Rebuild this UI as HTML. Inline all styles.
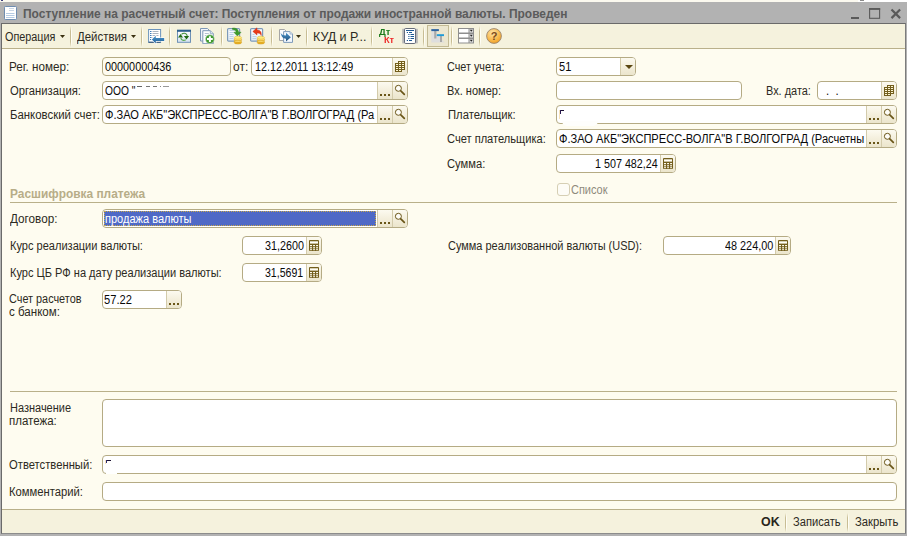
<!DOCTYPE html>
<html><head><meta charset="utf-8">
<style>
html,body{margin:0;padding:0;}
body{width:907px;height:536px;overflow:hidden;background:#b2b2b2;position:relative;font-family:"Liberation Sans",sans-serif;font-size:12px;color:#2c2a22;}
.a,.f,.l,.ln,.sep,svg{position:absolute;}
.l{white-space:nowrap;line-height:13px;transform-origin:0 0;}
.f{box-sizing:border-box;height:19px;border:1px solid #b5ab84;border-radius:4px;background:#fff;overflow:hidden;color:#0a0a0a;}
.t{position:absolute;top:3px;line-height:13px;white-space:nowrap;transform-origin:0 0;}
.b{position:absolute;top:0;bottom:0;width:15px;background:linear-gradient(#fcfaf0,#f3eedb 55%,#ebe5cc);border-left:1px solid #d3cbab;box-sizing:border-box;}
.ln{height:1px;background:#b9b08a;}
.sep{top:26px;width:2px;height:21px;background:linear-gradient(rgba(200,189,148,0),#c8bd94 25%,#c8bd94 75%,rgba(200,189,148,0)) 0 0/1px 100% no-repeat,linear-gradient(rgba(255,255,255,0),#fffef6 25%,#fffef6 75%,rgba(255,255,255,0)) 1px 0/1px 100% no-repeat;}
</style></head><body>
<div class="a" style="left:0;top:0;width:907px;height:2px;background:#fbf9ef"></div>
<div class="a" style="left:1px;top:0;width:2px;height:1px;background:#3a3a7a"></div>
<div class="a" style="left:858px;top:0;width:49px;height:2px;background:#fff"></div>
<div class="a" style="left:860px;top:0;width:4px;height:1px;background:#8a8a8a"></div>
<div class="a" style="left:1px;top:23px;width:905px;height:511px;background:#fefcf0;border:1px solid #6a6a6a;border-bottom-color:#8c8c8c;border-right-color:#7c7c7c;box-sizing:border-box"></div>
<div class="a" style="left:2px;top:24px;width:903px;height:25px;background:#f5f2dd;border-bottom:1px solid #b9b08a;box-sizing:border-box"></div>
<div class="a" style="left:2px;top:509px;width:903px;height:24px;background:#f5f2dd;border-top:1px solid #b9b08a;box-sizing:border-box"></div>
<div class="l" style="left:23.45px;top:8px;transform:scaleX(0.9960);font-weight:bold;color:#5b5b5b;">Поступление на расчетный счет: Поступления от продажи иностранной валюты. Проведен</div>
<div class="l" style="left:9.33px;top:61px;transform:scaleX(0.9720);">Рег. номер:</div>
<div class="f" style="left:102px;top:57px;width:129px;background:#fefcf0;"><span class="t" style="left:2.35px;transform:scaleX(0.9036);">00000000436</span></div>
<div class="l" style="left:233.30px;top:61px;transform:scaleX(0.9982);">от:</div>
<div class="f" style="left:251px;top:57px;width:157px;"><span class="t" style="left:2.51px;transform:scaleX(0.9002);">12.12.2011 13:12:49</span><span class="b" style="right:0px"><svg width="14" height="17" viewBox="0 0 14 17" style="left:0;top:0"><path d="M5 3h7v9h-3v2h-7v-9h3z" fill="#735e1c"/><g fill="#fdf6d4"><rect x="6" y="4" width="2" height="1"/><rect x="9" y="4" width="2" height="1"/><rect x="3" y="6" width="2" height="1"/><rect x="6" y="6" width="2" height="1"/><rect x="9" y="6" width="2" height="1"/><rect x="3" y="8" width="2" height="1"/><rect x="6" y="8" width="2" height="1"/><rect x="9" y="8" width="2" height="1"/><rect x="3" y="10" width="2" height="1"/><rect x="6" y="10" width="2" height="1"/><rect x="9" y="10" width="2" height="1"/><rect x="3" y="12" width="2" height="1"/><rect x="6" y="12" width="2" height="1"/></g></svg></span></div>
<div class="l" style="left:9.53px;top:85px;transform:scaleX(0.9363);">Организация:</div>
<div class="f" style="left:102px;top:81px;width:306px;"><span class="a" style="left:34px;top:4px;width:5px;height:1px;background:#666"></span><span class="a" style="left:43px;top:4px;width:4px;height:1px;background:#777"></span><span class="a" style="left:50px;top:4px;width:4px;height:1px;background:#777"></span><span class="a" style="left:57px;top:4px;width:1px;height:1px;background:#888"></span><span class="a" style="left:60px;top:4px;width:6px;height:1px;background:#999"></span><span class="t" style="left:1.57px;transform:scaleX(0.8520);">ООО "</span><span class="b" style="right:15px"><svg width="14" height="17" viewBox="0 0 14 17" style="left:0;top:0"><rect x="2" y="12" width="2" height="2" fill="#6a5618"/><rect x="6" y="12" width="2" height="2" fill="#6a5618"/><rect x="10" y="12" width="2" height="2" fill="#6a5618"/></svg></span><span class="b" style="right:0px"><svg width="14" height="17" viewBox="0 0 14 17" style="left:0;top:0"><circle cx="5.400" cy="6.300" r="3" fill="#fefdf8" stroke="#6a5618" stroke-width="1"/><path d="M7.800 8.800L11.300 12.300" stroke="#6a5618" stroke-width="1.700" stroke-linecap="round"/></svg></span></div>
<div class="l" style="left:9.65px;top:109px;transform:scaleX(0.9490);">Банковский счет:</div>
<div class="f" style="left:102px;top:105px;width:306px;"><span class="t" style="left:2.02px;transform:scaleX(0.9242);">Ф.ЗАО АКБ"ЭКСПРЕСС-ВОЛГА"В Г.ВОЛГОГРАД (Ра</span><span class="b" style="right:15px"><svg width="14" height="17" viewBox="0 0 14 17" style="left:0;top:0"><rect x="2" y="12" width="2" height="2" fill="#6a5618"/><rect x="6" y="12" width="2" height="2" fill="#6a5618"/><rect x="10" y="12" width="2" height="2" fill="#6a5618"/></svg></span><span class="b" style="right:0px"><svg width="14" height="17" viewBox="0 0 14 17" style="left:0;top:0"><circle cx="5.400" cy="6.300" r="3" fill="#fefdf8" stroke="#6a5618" stroke-width="1"/><path d="M7.800 8.800L11.300 12.300" stroke="#6a5618" stroke-width="1.700" stroke-linecap="round"/></svg></span></div>
<div class="l" style="left:447.04px;top:61px;transform:scaleX(0.9014);">Счет учета:</div>
<div class="f" style="left:556px;top:57px;width:80px;"><span class="t" style="left:1.54px;transform:scaleX(0.9224);">51</span><span class="b" style="right:0px"><svg width="14" height="17" viewBox="0 0 14 17" style="left:0;top:0"><path d="M4 7h8l-4 4z" fill="#5a4712"/></svg></span></div>
<div class="l" style="left:447.48px;top:85px;transform:scaleX(0.9183);">Вх. номер:</div>
<div class="f" style="left:556px;top:81px;width:186px;"></div>
<div class="l" style="left:765.79px;top:85px;transform:scaleX(0.9101);">Вх. дата:</div>
<div class="f" style="left:817px;top:81px;width:80px;"><span class="t" style="left:7.94px;transform:scaleX(0.9438);">.&nbsp; .</span><span class="b" style="right:0px"><svg width="14" height="17" viewBox="0 0 14 17" style="left:0;top:0"><path d="M5 3h7v9h-3v2h-7v-9h3z" fill="#735e1c"/><g fill="#fdf6d4"><rect x="6" y="4" width="2" height="1"/><rect x="9" y="4" width="2" height="1"/><rect x="3" y="6" width="2" height="1"/><rect x="6" y="6" width="2" height="1"/><rect x="9" y="6" width="2" height="1"/><rect x="3" y="8" width="2" height="1"/><rect x="6" y="8" width="2" height="1"/><rect x="9" y="8" width="2" height="1"/><rect x="3" y="10" width="2" height="1"/><rect x="6" y="10" width="2" height="1"/><rect x="9" y="10" width="2" height="1"/><rect x="3" y="12" width="2" height="1"/><rect x="6" y="12" width="2" height="1"/></g></svg></span></div>
<div class="l" style="left:447.86px;top:109px;transform:scaleX(0.9386);">Плательщик:</div>
<div class="f" style="left:556px;top:105px;width:341px;"><span class="a" style="left:2px;top:4px;width:1px;height:9px;background:#f8e2b8"></span><span class="a" style="left:3px;top:4px;width:4px;height:1px;background:#1a1030"></span><span class="a" style="left:3px;top:4px;width:1px;height:4px;background:#2a1a50"></span><span class="b" style="right:15px"><svg width="14" height="17" viewBox="0 0 14 17" style="left:0;top:0"><rect x="2" y="12" width="2" height="2" fill="#6a5618"/><rect x="6" y="12" width="2" height="2" fill="#6a5618"/><rect x="10" y="12" width="2" height="2" fill="#6a5618"/></svg></span><span class="b" style="right:0px"><svg width="14" height="17" viewBox="0 0 14 17" style="left:0;top:0"><circle cx="5.400" cy="6.300" r="3" fill="#fefdf8" stroke="#6a5618" stroke-width="1"/><path d="M7.800 8.800L11.300 12.300" stroke="#6a5618" stroke-width="1.700" stroke-linecap="round"/></svg></span></div>
<div class="a" style="left:562px;top:121px;width:36px;height:5px;background:#fefefc;border-radius:0 0 6px 6px"></div>
<div class="l" style="left:447.02px;top:133px;transform:scaleX(0.9246);">Счет плательщика:</div>
<div class="f" style="left:556px;top:129px;width:341px;"><span class="t" style="left:2.32px;transform:scaleX(0.9234);">Ф.ЗАО АКБ"ЭКСПРЕСС-ВОЛГА"В Г.ВОЛГОГРАД (Расчетны</span><span class="b" style="right:15px"><svg width="14" height="17" viewBox="0 0 14 17" style="left:0;top:0"><rect x="2" y="12" width="2" height="2" fill="#6a5618"/><rect x="6" y="12" width="2" height="2" fill="#6a5618"/><rect x="10" y="12" width="2" height="2" fill="#6a5618"/></svg></span><span class="b" style="right:0px"><svg width="14" height="17" viewBox="0 0 14 17" style="left:0;top:0"><circle cx="5.400" cy="6.300" r="3" fill="#fefdf8" stroke="#6a5618" stroke-width="1"/><path d="M7.800 8.800L11.300 12.300" stroke="#6a5618" stroke-width="1.700" stroke-linecap="round"/></svg></span></div>
<div class="l" style="left:447.02px;top:158px;transform:scaleX(0.9321);">Сумма:</div>
<div class="f" style="left:556px;top:154px;width:120px;"><span class="t" style="left:38.42px;transform:scaleX(0.8958);">1 507 482,24</span><span class="b" style="right:0px"><svg width="14" height="17" viewBox="0 0 14 17" style="left:0;top:0"><rect x="2" y="3" width="10" height="11" rx="1" fill="#735e1c"/><rect x="3" y="4.300" width="8" height="2.300" fill="#fffef6"/><g fill="#fffdf0"><rect x="3" y="8" width="2" height="1.200"/><rect x="6.100" y="8" width="1.900" height="1.200"/><rect x="9.100" y="8" width="1.900" height="1.200"/><rect x="3" y="10.200" width="2" height="1.200"/><rect x="6.100" y="10.200" width="1.900" height="1.200"/><rect x="9.100" y="10.200" width="1.900" height="1.200"/><rect x="3" y="12.200" width="2" height="1"/><rect x="6.100" y="12.200" width="1.900" height="1"/><rect x="9.100" y="12.200" width="1.900" height="1"/></g></svg></span></div>
<div class="a" style="left:557px;top:183px;width:13px;height:13px;border:1px solid #d6cfb4;border-radius:3px;box-sizing:border-box;background:#fdfcf6"></div>
<div class="l" style="left:571.23px;top:184px;transform:scaleX(0.9146);color:#8e8a7c;">Список</div>
<div class="l" style="left:10.16px;top:188px;transform:scaleX(0.9915);font-weight:bold;color:#b7ad88;">Расшифровка платежа</div>
<div class="ln" style="left:10px;top:202px;width:887px"></div>
<div class="l" style="left:10.08px;top:213px;transform:scaleX(0.9752);">Договор:</div>
<div class="f" style="left:102px;top:209px;width:306px;"><span class="a" style="left:1px;top:1px;width:272px;height:15px;background:#4f69c6;outline:1px dotted #c9a94a;outline-offset:-1px"></span><span class="t" style="left:1.50px;transform:scaleX(0.9191);color:#fff;">продажа валюты</span><span class="b" style="right:15px"><svg width="14" height="17" viewBox="0 0 14 17" style="left:0;top:0"><rect x="2" y="12" width="2" height="2" fill="#6a5618"/><rect x="6" y="12" width="2" height="2" fill="#6a5618"/><rect x="10" y="12" width="2" height="2" fill="#6a5618"/></svg></span><span class="b" style="right:0px"><svg width="14" height="17" viewBox="0 0 14 17" style="left:0;top:0"><circle cx="5.400" cy="6.300" r="3" fill="#fefdf8" stroke="#6a5618" stroke-width="1"/><path d="M7.800 8.800L11.300 12.300" stroke="#6a5618" stroke-width="1.700" stroke-linecap="round"/></svg></span></div>
<div class="l" style="left:9.68px;top:240px;transform:scaleX(0.9201);">Курс реализации валюты:</div>
<div class="f" style="left:242px;top:236px;width:80px;"><span class="t" style="left:21.75px;transform:scaleX(0.8965);">31,2600</span><span class="b" style="right:0px"><svg width="14" height="17" viewBox="0 0 14 17" style="left:0;top:0"><rect x="2" y="3" width="10" height="11" rx="1" fill="#735e1c"/><rect x="3" y="4.300" width="8" height="2.300" fill="#fffef6"/><g fill="#fffdf0"><rect x="3" y="8" width="2" height="1.200"/><rect x="6.100" y="8" width="1.900" height="1.200"/><rect x="9.100" y="8" width="1.900" height="1.200"/><rect x="3" y="10.200" width="2" height="1.200"/><rect x="6.100" y="10.200" width="1.900" height="1.200"/><rect x="9.100" y="10.200" width="1.900" height="1.200"/><rect x="3" y="12.200" width="2" height="1"/><rect x="6.100" y="12.200" width="1.900" height="1"/><rect x="9.100" y="12.200" width="1.900" height="1"/></g></svg></span></div>
<div class="l" style="left:447.93px;top:240px;transform:scaleX(0.9134);">Сумма реализованной валюты (USD):</div>
<div class="f" style="left:663px;top:236px;width:128px;"><span class="t" style="left:60.87px;transform:scaleX(0.9043);">48 224,00</span><span class="b" style="right:0px"><svg width="14" height="17" viewBox="0 0 14 17" style="left:0;top:0"><rect x="2" y="3" width="10" height="11" rx="1" fill="#735e1c"/><rect x="3" y="4.300" width="8" height="2.300" fill="#fffef6"/><g fill="#fffdf0"><rect x="3" y="8" width="2" height="1.200"/><rect x="6.100" y="8" width="1.900" height="1.200"/><rect x="9.100" y="8" width="1.900" height="1.200"/><rect x="3" y="10.200" width="2" height="1.200"/><rect x="6.100" y="10.200" width="1.900" height="1.200"/><rect x="9.100" y="10.200" width="1.900" height="1.200"/><rect x="3" y="12.200" width="2" height="1"/><rect x="6.100" y="12.200" width="1.900" height="1"/><rect x="9.100" y="12.200" width="1.900" height="1"/></g></svg></span></div>
<div class="l" style="left:9.68px;top:267px;transform:scaleX(0.9207);">Курс ЦБ РФ на дату реализации валюты:</div>
<div class="f" style="left:242px;top:263px;width:80px;"><span class="t" style="left:21.76px;transform:scaleX(0.8802);">31,5691</span><span class="b" style="right:0px"><svg width="14" height="17" viewBox="0 0 14 17" style="left:0;top:0"><rect x="2" y="3" width="10" height="11" rx="1" fill="#735e1c"/><rect x="3" y="4.300" width="8" height="2.300" fill="#fffef6"/><g fill="#fffdf0"><rect x="3" y="8" width="2" height="1.200"/><rect x="6.100" y="8" width="1.900" height="1.200"/><rect x="9.100" y="8" width="1.900" height="1.200"/><rect x="3" y="10.200" width="2" height="1.200"/><rect x="6.100" y="10.200" width="1.900" height="1.200"/><rect x="9.100" y="10.200" width="1.900" height="1.200"/><rect x="3" y="12.200" width="2" height="1"/><rect x="6.100" y="12.200" width="1.900" height="1"/><rect x="9.100" y="12.200" width="1.900" height="1"/></g></svg></span></div>
<div class="l" style="left:9.13px;top:293px;transform:scaleX(0.9052);">Счет расчетов</div>
<div class="l" style="left:9.22px;top:306px;transform:scaleX(0.9639);">с банком:</div>
<div class="f" style="left:102px;top:290px;width:80px;"><span class="t" style="left:1.44px;transform:scaleX(0.9276);">57.22</span><span class="b" style="right:0px"><svg width="14" height="17" viewBox="0 0 14 17" style="left:0;top:0"><rect x="2" y="12" width="2" height="2" fill="#6a5618"/><rect x="6" y="12" width="2" height="2" fill="#6a5618"/><rect x="10" y="12" width="2" height="2" fill="#6a5618"/></svg></span></div>
<div class="ln" style="left:10px;top:391px;width:887px"></div>
<div class="l" style="left:9.68px;top:402px;transform:scaleX(0.9152);">Назначение</div>
<div class="l" style="left:8.86px;top:415px;transform:scaleX(0.9587);">платежа:</div>
<div class="f" style="left:102px;top:399px;width:795px;height:48px;"></div>
<div class="l" style="left:9.43px;top:459px;transform:scaleX(0.9360);">Ответственный:</div>
<div class="f" style="left:102px;top:455px;width:795px;"><span class="a" style="left:2px;top:4px;width:1px;height:4px;background:#f8e2b8"></span><span class="a" style="left:3px;top:4px;width:5px;height:1px;background:#1a1030"></span><span class="a" style="left:3px;top:4px;width:1px;height:3px;background:#2a2a70"></span><span class="b" style="right:15px"><svg width="14" height="17" viewBox="0 0 14 17" style="left:0;top:0"><rect x="2" y="12" width="2" height="2" fill="#6a5618"/><rect x="6" y="12" width="2" height="2" fill="#6a5618"/><rect x="10" y="12" width="2" height="2" fill="#6a5618"/></svg></span><span class="b" style="right:0px"><svg width="14" height="17" viewBox="0 0 14 17" style="left:0;top:0"><circle cx="5.400" cy="6.300" r="3" fill="#fefdf8" stroke="#6a5618" stroke-width="1"/><path d="M7.800 8.800L11.300 12.300" stroke="#6a5618" stroke-width="1.700" stroke-linecap="round"/></svg></span></div>
<div class="a" style="left:106px;top:469px;width:11px;height:5px;background:#fff"></div>
<div class="l" style="left:9.46px;top:486px;transform:scaleX(0.9366);">Комментарий:</div>
<div class="f" style="left:102px;top:482px;width:795px;"></div>
<div class="l" style="left:761.28px;top:516px;transform:scaleX(1.0360);font-weight:bold;color:#2a261a;">OK</div>
<div class="l" style="left:792.95px;top:516px;transform:scaleX(0.9270);">Записать</div>
<div class="l" style="left:854.85px;top:516px;transform:scaleX(0.9388);">Закрыть</div>
<div class="sep" style="left:785px;top:513px;height:19px"></div>
<div class="sep" style="left:847px;top:513px;height:19px"></div>
<div class="l" style="left:5.35px;top:31px;transform:scaleX(0.9009);">Операция</div>
<div class="l" style="left:76.78px;top:31px;transform:scaleX(0.9511);">Действия</div>
<div class="l" style="left:313.26px;top:31px;transform:scaleX(1.0370);">КУД и Р...</div>
<div class="sep" style="left:70px"></div>
<div class="sep" style="left:141px"></div>
<div class="sep" style="left:169px"></div>
<div class="sep" style="left:221px"></div>
<div class="sep" style="left:271px"></div>
<div class="sep" style="left:306px"></div>
<div class="sep" style="left:371px"></div>
<div class="sep" style="left:423px"></div>
<div class="sep" style="left:451px"></div>
<div class="sep" style="left:479px"></div>
<svg width="5" height="3" style="left:60px;top:35px"><path d="M0 0h5l-2.500 3z" fill="#3a3010"/></svg>
<svg width="5" height="3" style="left:131px;top:35px"><path d="M0 0h5l-2.500 3z" fill="#3a3010"/></svg>
<svg width="5" height="3" style="left:296px;top:35px"><path d="M0 0h5l-2.500 3z" fill="#3a3010"/></svg>
<!-- title icon -->
<svg width="14" height="15" viewBox="0 0 14 15" style="left:4px;top:6px"><rect x="0.500" y="0.500" width="12" height="13" rx="0.800" fill="#fff" stroke="#6f8db0"/><path d="M5 2.500h5M5 4.500h5" stroke="#c9d6e6"/><path d="M2 7.500h8.500M2 9.500h8.500M2 11.500h8.500" stroke="#b5cbe3"/></svg>
<!-- window buttons -->
<svg width="56" height="14" viewBox="0 0 56 14" style="left:848px;top:7px"><rect x="3" y="10" width="8" height="2" fill="#5a5a5a"/><rect x="21.600" y="2" width="10" height="9.300" fill="none" stroke="#5a5a5a" stroke-width="1.100"/><rect x="21" y="1" width="11.200" height="1.800" fill="#5a5a5a"/><path d="M43.500 2.500l8.600 8.600M52.100 2.500l-8.600 8.600" stroke="#5a5a5a" stroke-width="2.200"/></svg>
<!-- 1: list with blue arrow -->
<svg width="18" height="17" viewBox="0 0 18 17" style="left:147px;top:28px"><defs><linearGradient id="a1g" x1="0" y1="0" x2="0" y2="1"><stop offset="0" stop-color="#4a94cc"/><stop offset="1" stop-color="#1f5f96"/></linearGradient></defs><rect x="1.600" y="1.500" width="12" height="12.800" fill="#fff" stroke="#6b93bc" stroke-width="1"/><path d="M1.600 14.300h12" stroke="#3f5f80" stroke-width="1.200"/><path d="M3 3.500h1.500M3 5.500h1.500M3 7.500h1.500M3 9.500h1.500M3 11.500h1.500" stroke="#3a7ab8"/><path d="M5.500 3.500h6M5.500 5.500h6M5.500 7.500h6M5.500 9.500h2" stroke="#aab4c0"/><path d="M4.900 11.500l3.900-3.800v2.400h8.400v2.900h-8.400v2.600z" fill="url(#a1g)" stroke="#fff" stroke-width="1.200" paint-order="stroke"/></svg>
<!-- 2: window refresh -->
<svg width="16" height="16" viewBox="0 0 16 16" style="left:176px;top:28px"><defs><linearGradient id="wg" x1="0" y1="0" x2="0" y2="1"><stop offset="0" stop-color="#ffffff"/><stop offset="1" stop-color="#d4e2f0"/></linearGradient></defs><rect x="1.500" y="2.300" width="13" height="12" fill="url(#wg)" stroke="#6f92b6"/><rect x="1" y="1.800" width="14" height="2" fill="#2c5f8e"/><path d="M5.500 6.300c2-1.800 5-1.300 5.800 1.500" fill="none" stroke="#3f8f33" stroke-width="1.100"/><path d="M9.800 11.700c-2 1.300-4.300 0.800-5-1.700" fill="none" stroke="#5aa84e" stroke-width="1.100"/><path d="M4.500 5.900l2.500 3.700h-5z" fill="#1f6b12"/><path d="M10.500 11.400l-2.600-3.500h5.200z" fill="#1f6b12"/></svg>
<!-- 3: copy with plus -->
<svg width="17" height="17" viewBox="0 0 17 17" style="left:199px;top:27px"><path d="M1.500 1.500h7l1.500 1.500v11h-8.500z" fill="#f1f5fa" stroke="#7e98b6"/><path d="M3.800 3.700h7.500l3 3v10h-10.500z" fill="#fdfeff" stroke="#7e98b6"/><path d="M11.300 3.700v3h3" fill="#dde7f2" stroke="#7e98b6" stroke-width="0.700"/><path d="M5.800 6.500h4M5.800 8.500h1.500" stroke="#b4c2d2"/><circle cx="10.900" cy="12.100" r="4.700" fill="#9fc79a"/><circle cx="10.900" cy="12.100" r="3.900" fill="#3f9a2f"/><path d="M10.900 9.200v5.800M8 12.100h5.800" stroke="#fff" stroke-width="2"/></svg>
<!-- 4: doc green arrow coins -->
<svg width="17" height="18" viewBox="0 0 17 18" style="left:226px;top:27px"><defs><linearGradient id="pgG" x1="0" y1="0" x2="0" y2="1"><stop offset="0" stop-color="#ffffff"/><stop offset="1" stop-color="#dfeaf5"/></linearGradient></defs><rect x="1.600" y="1.600" width="12" height="12.600" rx="1" fill="url(#pgG)" stroke="#7d9aba" stroke-width="1.200"/><path d="M3.500 3.500h5M3.500 5.500h4M3.500 7.500h4M3.500 9.500h4M3.500 11.500h4" stroke="#bcd0e6"/><path d="M6.500 1c3.300-0.300 5.800 1 6.200 4.200h2.400l-3.700 3.800-3.600-3.800h2.300c-0.300-1.700-1.500-2.600-3.600-2.700z" fill="#3a9a2a" stroke="#2a7a1a" stroke-width="0.400"/><g stroke="#c9921a" stroke-width="0.500"><ellipse cx="11.850" cy="15.500" rx="3.700" ry="1.500" fill="#eeb525"/><ellipse cx="11.850" cy="13.900" rx="3.700" ry="1.500" fill="#f3c233"/><ellipse cx="11.850" cy="12.300" rx="3.700" ry="1.500" fill="#f3c233"/><ellipse cx="11.850" cy="10.700" rx="3.700" ry="1.500" fill="#fdec7c" stroke="#e0b030"/></g><path d="M8.600 12.300c2 0.900 4.500 0.900 6.500 0M8.600 13.900c2 0.900 4.500 0.900 6.500 0" stroke="#fff3a8" stroke-width="0.500" fill="none"/></svg>
<!-- 5: doc red arrow coins -->
<svg width="17" height="18" viewBox="0 0 17 18" style="left:249px;top:27px"><defs><linearGradient id="pgR" x1="0" y1="0" x2="0" y2="1"><stop offset="0" stop-color="#ffffff"/><stop offset="1" stop-color="#dfeaf5"/></linearGradient></defs><rect x="1.600" y="1.600" width="12" height="12.600" rx="1" fill="url(#pgR)" stroke="#7d9aba" stroke-width="1.200"/><path d="M3.500 7.500h2M3.500 9.500h4M3.500 11.500h4" stroke="#bcd0e6"/><path d="M3.800 4.400l4.200-3.600v2.200c3.200 0 4.800 1.900 4.200 5.600-0.500-1.900-1.700-2.600-4.200-2.600v2z" fill="#e83a1a" stroke="#c82a10" stroke-width="0.400"/><g stroke="#c9921a" stroke-width="0.500"><ellipse cx="11.850" cy="15.500" rx="3.700" ry="1.500" fill="#eeb525"/><ellipse cx="11.850" cy="13.900" rx="3.700" ry="1.500" fill="#f3c233"/><ellipse cx="11.850" cy="12.300" rx="3.700" ry="1.500" fill="#f3c233"/><ellipse cx="11.850" cy="10.700" rx="3.700" ry="1.500" fill="#fdec7c" stroke="#e0b030"/></g><path d="M8.600 12.300c2 0.900 4.500 0.900 6.500 0M8.600 13.900c2 0.900 4.500 0.900 6.500 0" stroke="#fff3a8" stroke-width="0.500" fill="none"/></svg>
<!-- 6: docs with blue arrow -->
<svg width="16" height="16" viewBox="0 0 16 16" style="left:278px;top:28px"><defs><linearGradient id="bag" x1="0" y1="0" x2="0" y2="1"><stop offset="0" stop-color="#4a94cc"/><stop offset="1" stop-color="#1f4f7a"/></linearGradient></defs><path d="M1.500 1.500h5l2 2v9h-7z" fill="#fbfcfd" stroke="#a6a6a6"/><path d="M5.600 3.600h6.400l2.500 2.500v8.300h-8.900z" fill="#f3f8fd" stroke="#7f9bb9"/><path d="M12 3.600v2.500h2.500" fill="#dbe6f2" stroke="#7f9bb9" stroke-width="0.600"/><path d="M2.600 4.600c0.600 2 2.500 3 5.400 3v-2.900l4.900 4.500-4.900 4.400v-2.800c-2.700 0-4.700-1.800-5.400-6.200z" fill="url(#bag)"/></svg>
<!-- 8: doc lines -->
<svg width="16" height="17" viewBox="0 0 16 17" style="left:402px;top:28px"><rect x="0.200" y="0.800" width="15.600" height="14.600" fill="#b8b8b8"/><rect x="2.500" y="0.500" width="11" height="15" rx="1.200" fill="#fff" stroke="#565e6e" stroke-width="0.900"/><path d="M4 2.500h8" stroke="#1f5a94"/><path d="M4.800 4.500h1.200M6.300 6.500h1.200M6.300 8.500h1.200M6.300 10.500h1.200M4.800 12.500h1.200" stroke="#1f5a94"/><path d="M7 4.500h3M8.500 6.500h3.500M8.500 8.500h3.500M8.500 10.500h3.500M7 12.500h3" stroke="#1f5a94"/></svg>
<!-- 9: pressed button -->
<div class="a" style="left:427px;top:25px;width:22px;height:22px;box-sizing:border-box;border:1px solid #c3ba94;background:#ece7d0"></div>
<svg width="16" height="16" viewBox="0 0 16 16" style="left:430px;top:28px"><path d="M1.300 3v11.500h13.500l-4-4v-2.500h-3.500l-2-2v-3z" fill="#dedede"/><rect x="4.200" y="3" width="2.200" height="7.500" fill="#a9a9a9"/><rect x="10" y="8" width="2" height="6" fill="#a9a9a9"/><rect x="1.300" y="1.100" width="7.600" height="2" fill="#2f64a0"/><rect x="6.800" y="6.200" width="7.200" height="1.900" fill="#1f9bd8"/></svg>
<!-- 10: list rows -->
<svg width="17" height="17" viewBox="0 0 17 17" style="left:457px;top:27px"><rect x="1" y="1" width="16" height="15.500" fill="#8e8e8e"/><g fill="#fff"><rect x="2" y="2" width="9.500" height="3.500"/><rect x="2" y="7" width="9.500" height="3.500"/><rect x="2" y="12" width="9.500" height="3.500"/></g><g fill="#dcdcdc"><rect x="12.500" y="2" width="3.500" height="3.500"/><rect x="12.500" y="7" width="3.500" height="3.500"/><rect x="12.500" y="12" width="3.500" height="3.500"/></g><path d="M12.800 2.800h3l-1.500 2zM12.800 7.800h3l-1.500 2zM12.800 12.800h3l-1.500 2z" fill="#222"/></svg>
<!-- 11: help -->
<svg width="18" height="18" viewBox="0 0 18 18" style="left:485px;top:27px"><defs><radialGradient id="hg" cx="0.400" cy="0.300" r="0.800"><stop offset="0" stop-color="#fde3a8"/><stop offset="0.600" stop-color="#f8b84a"/><stop offset="1" stop-color="#f09a1a"/></radialGradient></defs><circle cx="9" cy="9" r="7.400" fill="url(#hg)" stroke="#9a8670" stroke-width="0.900"/><text x="9" y="13.200" text-anchor="middle" font-family="Liberation Sans, sans-serif" font-weight="bold" font-size="11" fill="#7a4a1c">?</text></svg>
<!-- Dt Kt -->
<div class="a" style="left:378.500px;top:27px;font:bold 9px/10px 'Liberation Sans',sans-serif;color:#1a7a1a;white-space:nowrap;transform:scaleX(1.05);transform-origin:0 0;will-change:transform">Дт</div>
<div class="a" style="left:384px;top:35px;font:bold 9px/10px 'Liberation Sans',sans-serif;color:#ee2a2a;white-space:nowrap;transform:scaleX(1.02);transform-origin:0 0;will-change:transform">Кт</div>

</body></html>
